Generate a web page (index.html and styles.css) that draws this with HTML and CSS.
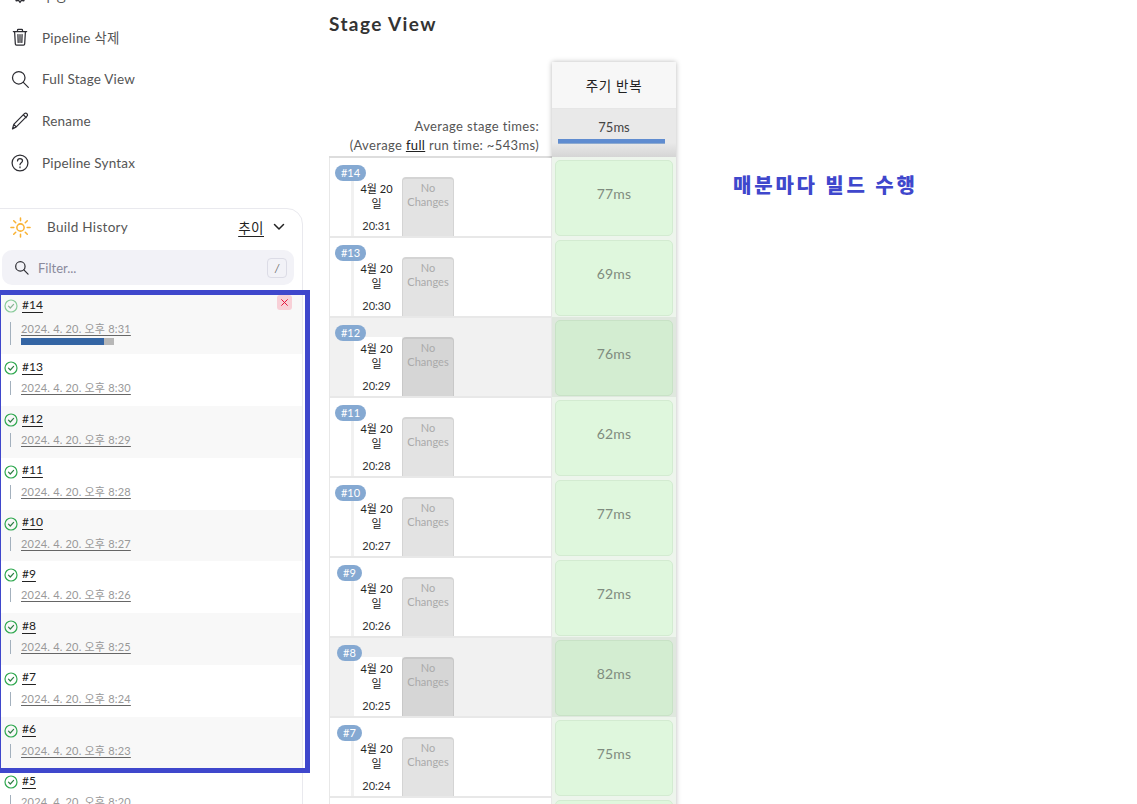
FILE: index.html
```html
<!DOCTYPE html>
<html lang="ko">
<head>
<meta charset="utf-8">
<title>Pipeline</title>
<link rel="stylesheet" href="styles.css">
</head>
<body>
<div class="page">
  <aside class="sidebar">
    <nav class="menu">
      <a class="menu-item"><svg class="ico" viewBox="0 0 24 24"><circle cx="12" cy="12" r="3.2"/><path d="M12 3l1.6 2.6 3-.7.7 3 2.7 1.5-1.4 2.6 1.4 2.6-2.7 1.5-.7 3-3-.7L12 21l-1.6-2.6-3 .7-.7-3-2.7-1.5L5.400 12 4 9.400l2.700-1.500.7-3 3 .7z"/></svg><span>구성</span></a>
      <a class="menu-item"><svg class="ico" viewBox="0 0 24 24"><path d="M4 5.500h16M9 5.500V3.800c0-.6.500-1 1-1h4c.5 0 1 .4 1 1v1.700M5.500 5.500l.9 15c0 .8.700 1.300 1.400 1.300h8.400c.7 0 1.400-.5 1.400-1.300l.9-15M9.500 9l.3 9.500M12 9v9.500M14.500 9l-.3 9.500"/></svg><span>Pipeline 삭제</span></a>
      <a class="menu-item"><svg class="ico" viewBox="0 0 24 24"><circle cx="10.500" cy="10.500" r="7.500"/><path d="M16 16l6 6"/></svg><span>Full Stage View</span></a>
      <a class="menu-item"><svg class="ico" viewBox="0 0 24 24"><path d="M3 21.500l1.500-5.500L17.300 3.200c.9-.9 2.200-.9 3 0 .9.800.9 2.100 0 3L7.500 19z M3 21.500L7.500 19M4.500 16l3 3M16 4.500l3.500 3.500"/></svg><span>Rename</span></a>
      <a class="menu-item"><svg class="ico" viewBox="0 0 24 24"><circle cx="12" cy="12" r="9.500"/><path d="M9 9.500c0-1.700 1.300-2.800 3-2.800s3 1.100 3 2.600c0 2.400-3 2.400-3 4.700M12 16.600v1"/></svg><span>Pipeline Syntax</span></a>
    </nav>
    <section class="history">
      <header class="history-head">
        <svg class="sun" viewBox="0 0 22 22"><circle cx="11" cy="11" r="3.800"/><path d="M11 1v3M11 18v3M1 11h3M18 11h3M3.900 3.900L6 6M16 16l2.100 2.100M3.900 18.100L6 16M16 6l2.100-2.100"/></svg>
        <span class="history-title">Build History</span>
        <a class="trend">추이</a>
        <svg class="chev" viewBox="0 0 12 8"><path d="M1.500 1.500L6 6l4.500-4.500"/></svg>
      </header>
      <div class="filter">
        <svg class="filter-ico" viewBox="0 0 16 16"><circle cx="6.800" cy="6.800" r="5"/><path d="M10.500 10.500L15 15"/></svg>
        <span class="filter-text">Filter...</span>
        <kbd class="key">/</kbd>
      </div>
      <ul class="builds">
        <li class="build build-first shaded">
          <div class="build-top"><svg class="ok faded" viewBox="0 0 14 14"><circle cx="7" cy="7" r="6"/><path d="M4.500 7.200l1.800 1.800 3.300-3.600"/></svg><a class="num">#14</a>
            <span class="cancel"><svg viewBox="0 0 10 10"><path d="M1.500 1.500l7 7M8.500 1.500l-7 7"/></svg></span></div>
          <div class="build-date"><a>2024. 4. 20. 오후 8:31</a><div class="progress"><div class="progress-fill"></div></div></div>
        </li>
        <li class="build"><div class="build-top"><svg class="ok" viewBox="0 0 14 14"><circle cx="7" cy="7" r="6"/><path d="M4.500 7.200l1.800 1.800 3.300-3.600"/></svg><a class="num">#13</a></div><div class="build-date"><a>2024. 4. 20. 오후 8:30</a></div></li>
        <li class="build shaded"><div class="build-top"><svg class="ok" viewBox="0 0 14 14"><circle cx="7" cy="7" r="6"/><path d="M4.500 7.200l1.800 1.800 3.300-3.600"/></svg><a class="num">#12</a></div><div class="build-date"><a>2024. 4. 20. 오후 8:29</a></div></li>
        <li class="build"><div class="build-top"><svg class="ok" viewBox="0 0 14 14"><circle cx="7" cy="7" r="6"/><path d="M4.500 7.200l1.800 1.800 3.300-3.600"/></svg><a class="num">#11</a></div><div class="build-date"><a>2024. 4. 20. 오후 8:28</a></div></li>
        <li class="build shaded"><div class="build-top"><svg class="ok" viewBox="0 0 14 14"><circle cx="7" cy="7" r="6"/><path d="M4.500 7.200l1.800 1.800 3.300-3.600"/></svg><a class="num">#10</a></div><div class="build-date"><a>2024. 4. 20. 오후 8:27</a></div></li>
        <li class="build"><div class="build-top"><svg class="ok" viewBox="0 0 14 14"><circle cx="7" cy="7" r="6"/><path d="M4.500 7.200l1.800 1.800 3.300-3.600"/></svg><a class="num">#9</a></div><div class="build-date"><a>2024. 4. 20. 오후 8:26</a></div></li>
        <li class="build shaded"><div class="build-top"><svg class="ok" viewBox="0 0 14 14"><circle cx="7" cy="7" r="6"/><path d="M4.500 7.200l1.800 1.800 3.300-3.600"/></svg><a class="num">#8</a></div><div class="build-date"><a>2024. 4. 20. 오후 8:25</a></div></li>
        <li class="build"><div class="build-top"><svg class="ok" viewBox="0 0 14 14"><circle cx="7" cy="7" r="6"/><path d="M4.500 7.200l1.800 1.800 3.300-3.600"/></svg><a class="num">#7</a></div><div class="build-date"><a>2024. 4. 20. 오후 8:24</a></div></li>
        <li class="build shaded"><div class="build-top"><svg class="ok" viewBox="0 0 14 14"><circle cx="7" cy="7" r="6"/><path d="M4.500 7.200l1.800 1.800 3.300-3.600"/></svg><a class="num">#6</a></div><div class="build-date"><a>2024. 4. 20. 오후 8:23</a></div></li>
        <li class="build"><div class="build-top"><svg class="ok" viewBox="0 0 14 14"><circle cx="7" cy="7" r="6"/><path d="M4.500 7.200l1.800 1.800 3.300-3.600"/></svg><a class="num">#5</a></div><div class="build-date"><a>2024. 4. 20. 오후 8:20</a></div></li>
      </ul>
    </section>
  </aside>
  <main class="main">
    <h2 class="stage-title">Stage View</h2>
    <div class="stage">
      <div class="runs">
        <div class="avg">
          <div>Average stage times:</div>
          <div>(Average <a>full</a> run time: ~543ms)</div>
        </div>
        <div class="run"><span class="badge">#14</span><div class="run-body"><div class="date"><div>4월 20<br>일</div><div class="time">20:31</div></div><div class="changes">No<br>Changes</div></div></div>
        <div class="run"><span class="badge">#13</span><div class="run-body"><div class="date"><div>4월 20<br>일</div><div class="time">20:30</div></div><div class="changes">No<br>Changes</div></div></div>
        <div class="run run-alt"><span class="badge">#12</span><div class="run-body"><div class="date"><div>4월 20<br>일</div><div class="time">20:29</div></div><div class="changes">No<br>Changes</div></div></div>
        <div class="run"><span class="badge">#11</span><div class="run-body"><div class="date"><div>4월 20<br>일</div><div class="time">20:28</div></div><div class="changes">No<br>Changes</div></div></div>
        <div class="run"><span class="badge">#10</span><div class="run-body"><div class="date"><div>4월 20<br>일</div><div class="time">20:27</div></div><div class="changes">No<br>Changes</div></div></div>
        <div class="run"><span class="badge badge-short">#9</span><div class="run-body"><div class="date"><div>4월 20<br>일</div><div class="time">20:26</div></div><div class="changes">No<br>Changes</div></div></div>
        <div class="run run-alt"><span class="badge badge-short">#8</span><div class="run-body"><div class="date"><div>4월 20<br>일</div><div class="time">20:25</div></div><div class="changes">No<br>Changes</div></div></div>
        <div class="run"><span class="badge badge-short">#7</span><div class="run-body"><div class="date"><div>4월 20<br>일</div><div class="time">20:24</div></div><div class="changes">No<br>Changes</div></div></div>
        <div class="run"></div>
      </div>
      <div class="col">
        <div class="col-name">주기 반복</div>
        <div class="col-avg"><div>75ms</div><div class="col-bar"></div></div>
        <div class="cell-wrap"><div class="cell">77ms</div></div>
        <div class="cell-wrap"><div class="cell">69ms</div></div>
        <div class="cell-wrap cell-alt"><div class="cell">76ms</div></div>
        <div class="cell-wrap"><div class="cell">62ms</div></div>
        <div class="cell-wrap"><div class="cell">77ms</div></div>
        <div class="cell-wrap"><div class="cell">72ms</div></div>
        <div class="cell-wrap cell-alt"><div class="cell">82ms</div></div>
        <div class="cell-wrap"><div class="cell">75ms</div></div>
        <div class="cell-wrap"><div class="cell"></div></div>
      </div>
    </div>
  </main>
</div>
<div class="mark-box"></div>
<div class="mark-text">매분마다 빌드 수행</div>
</body>
</html>
```
FILE: styles.css
```css
* { box-sizing: border-box; }
html, body { margin: 0; height: 804px; overflow: hidden; background: #fff; }
body { font-family: "Lato", "Noto Sans CJK KR", sans-serif; color: #333; position: relative; }
a { color: inherit; }
.page { display: flex; margin-top: -26px; }

.sidebar { width: 323px; margin-left: -20px; flex: none; }
.menu { display: flex; flex-direction: column; padding-left: 30px; }
.menu-item { display: flex; align-items: center; height: 42.1px; gap: 12px; font-size: 13.500px; color: #555; letter-spacing: .2px; }
.ico { width: 20px; height: 20px; flex: none; fill: none; stroke: #2d2d33; stroke-width: 1.5; stroke-linecap: round; stroke-linejoin: round; }

.history { margin-top: 24px; border: 1px solid #e9e9ee; border-radius: 16px; padding-top: 7px; }
.history-head { display: flex; align-items: center; height: 22px; padding-left: 29px; font-size: 13.500px; }
.sun { width: 21px; height: 21px; fill: none; stroke: #f9b233; stroke-width: 1.6; stroke-linecap: round; flex: none; }
.history-title { margin-left: 16px; color: #555; letter-spacing: .3px; flex: 1; }
.trend { color: #222; text-decoration: underline; text-underline-offset: 3px; font-size: 13.500px; letter-spacing: .5px; }
.chev { width: 12px; height: 8px; margin: 0 17px 0 9px; fill: none; stroke: #222; stroke-width: 1.5; stroke-linecap: round; stroke-linejoin: round; flex: none; }

.filter { display: flex; align-items: center; height: 35px; margin: 12px 8px 0 21px; padding: 0 7px 0 12px; background: #f2f2f7; border-radius: 10px; }
.filter-ico { width: 15px; height: 15px; fill: none; stroke: #2d2d33; stroke-width: 1.3; stroke-linecap: round; flex: none; }
.filter-text { flex: 1; margin-left: 9px; font-size: 13px; color: #8a8a9c; }
.key { width: 20px; height: 20px; display: flex; align-items: center; justify-content: center; border: 1px solid #dcdce6; border-radius: 4px; font-family: inherit; font-size: 11px; color: #666; font-style: italic; }

.builds { list-style: none; margin: 7px 0 0; padding: 0; }
.build { height: 51.75px; padding: 3px 0 0 23px; background: #fff; }
.build-first { height: 62px; }
.build-first .build-date { margin-top: 8px; }
.shaded { background: #f8f8f8; }
.build-top { display: flex; align-items: center; height: 18px; font-size: 12px; position: relative; }
.ok { width: 14px; height: 14px; margin-top: 4px; fill: none; stroke: #2fa84f; stroke-width: 1.2; stroke-linecap: round; stroke-linejoin: round; flex: none; }
.ok path { stroke: #2f7d45; }
.faded { opacity: .55; }
.num { margin-left: 4px; color: #222; text-decoration: underline; text-underline-offset: 3px; }
.cancel { position: absolute; left: 273px; top: 0; width: 15px; height: 15px; display: flex; align-items: center; justify-content: center; background: #f8d0d7; border-radius: 3px; }
.cancel svg { width: 9px; height: 9px; fill: none; stroke: #e6133b; stroke-width: 1.1; }
.build-date { margin: 5px 0 0 6px; padding-top: 1px; font-size: 11px; color: #999; line-height: 14px; position: relative; padding-left: 11px; width: 130px; white-space: nowrap; letter-spacing: .2px; }
.build-date::before { content: ""; position: absolute; left: 0; top: 1px; bottom: 0; width: 1px; background: #a3b0bd; }
.build-date a { text-decoration: underline; text-decoration-color: #666; text-underline-offset: 2px; }
.progress { width: 93px; height: 7px; margin-top: 2px; background: #b7b7b7; }
.progress-fill { width: 83px; height: 7px; background: #3465a4; }

.main { margin-left: 26px; padding-top: 40px; flex: none; }
.stage-title { margin: 0; font-size: 19px; line-height: 20px; font-weight: 700; color: #333; letter-spacing: 1.400px; }
.stage { display: flex; margin-top: 28px; }
.runs { width: 223px; display: flex; flex-direction: column; }
.avg { height: 96px; padding: 55px 13px 0 0; border-bottom: 2px solid #ddd; text-align: right; font-size: 13px; line-height: 19px; color: #555; letter-spacing: .35px; }
.avg a { text-decoration: underline; color: #222; }
.run { height: 80px; position: relative; border: 1px solid #e8e8e8; border-top: 0; border-bottom-width: 2px; background: #fff; padding: 19px 0 0 21px; }
.run-alt { background: #f1f1f1; }
.badge { position: absolute; left: 5px; top: 7px; height: 16px; width: 31px; border-radius: 8px; background: #85a9d2; color: #fff; font-size: 11px; line-height: 16px; text-align: center; z-index: 1; }
.badge-short { width: 25px; left: 7px; }
.run-body { display: flex; height: 59px; }
.date { width: 51px; border-left: 3px solid #f1f1f1; background: #fff; font-size: 11px; line-height: 15px; color: #222; text-align: center; padding: 4px 3px 0 0; display: flex; flex-direction: column; justify-content: space-between; }
.time { padding-bottom: 3px; color: #333; }
.changes { width: 52px; background: #e3e3e3; border: 1px solid #d4d4d4; border-top-width: 2px; border-bottom: 0; border-radius: 4px 4px 0 0; color: #aaa; font-size: 11px; line-height: 14px; text-align: center; padding-top: 2px; }
.run-alt .changes { background: #d6d6d6; border-color: #c8c8c8; }

.col { width: 124px; flex: none; box-shadow: 0 0 5px rgba(0,0,0,.28); display: flex; flex-direction: column; background: #f2f5f2; }
.col-name { height: 47px; background: #f7f7f7; border-bottom: 1px solid #e6e6e6; display: flex; align-items: center; justify-content: center; font-size: 13.500px; color: #222; letter-spacing: .7px; }
.col-avg { height: 48px; padding-top: 10px; background: linear-gradient(#e9e9e9 70%, #d5d5d5); font-size: 13px; line-height: 17px; color: #444; text-align: center; }
.col-bar { height: 5px; margin: 3px 11px 0 6px; background: #5f8cd0; border-bottom: 1px solid #8daad0; }
.cell-wrap { height: 80px; padding: 3px 3px 1px; background: #edf5ec; }
.cell-alt { background: #dfe8de; }
.cell { height: 76px; border: 1px solid #d3ebd1; border-radius: 5px; background: #dff7dd; display: flex; align-items: center; justify-content: center; padding-bottom: 10px; font-size: 14px; color: #7f8c7f; letter-spacing: .2px; }
.cell-alt .cell { background: #d3edd1; border-color: #c8e2c6; }

.mark-box { position: absolute; left: -4px; top: 290px; width: 314px; height: 483px; border: 5px solid #3f47cc; pointer-events: none; }
.mark-text { position: absolute; left: 733px; top: 172px; font-size: 20px; line-height: 26px; font-weight: 900; color: #3f47cc; letter-spacing: 2.800px; white-space: nowrap; }
```
